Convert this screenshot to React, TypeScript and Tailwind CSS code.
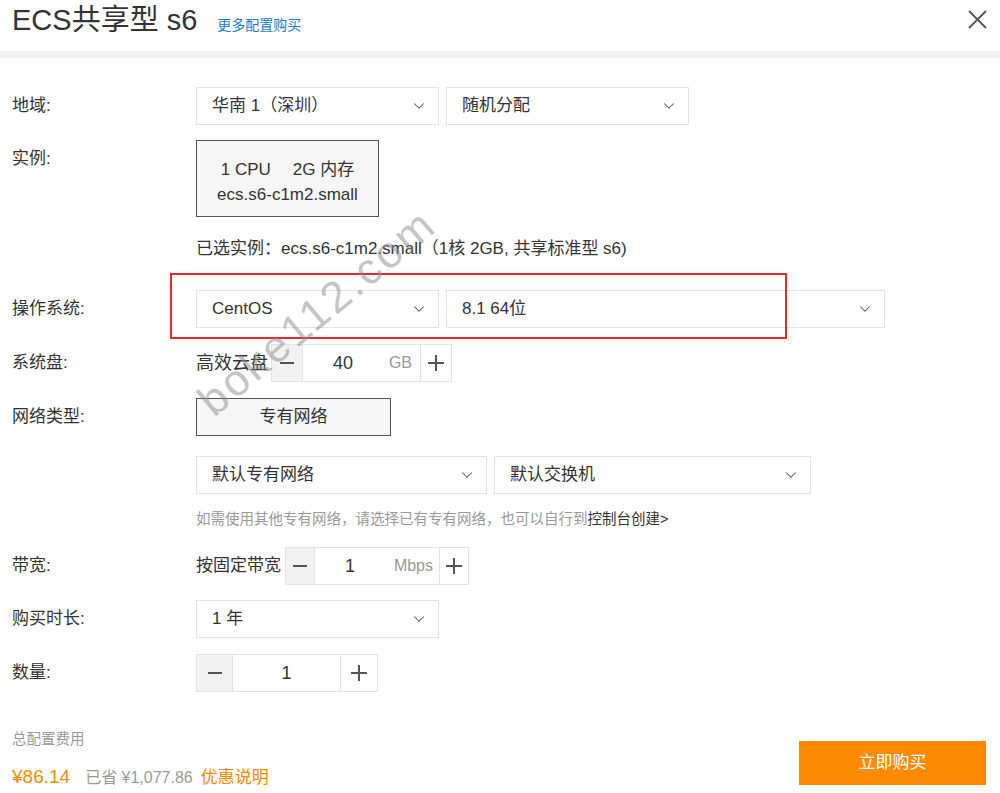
import { ChevronDown } from "lucide-react";

const font = "font-['Liberation_Sans','Noto_Sans_CJK_SC',sans-serif]";

function Select({ className, text }: { className: string; text: string }) {
  return (
    <div
      className={`flex h-[38px] items-center justify-between border border-[#e3e3e3] bg-white pl-[15px] pr-[10px] text-[17px] text-[#333] ${className}`}
    >
      <span>{text}</span>
      <ChevronDown size={18} strokeWidth={1.4} className="text-[#555]" />
    </div>
  );
}

function Label({ children }: { children: string }) {
  return (
    <div className="w-[184px] shrink-0 text-[17px] leading-[38px] text-[#333]">
      {children}
    </div>
  );
}

function MinusBtn({ w }: { w: string }) {
  return (
    <div className={`flex h-full items-center justify-center bg-[#f2f2f2] border-r border-[#e3e3e3] ${w}`}>
      <span className="block h-[1.5px] w-[14px] bg-[#555]" />
    </div>
  );
}

function PlusBtn({ w }: { w: string }) {
  return (
    <div className={`relative flex h-full items-center justify-center border-l border-[#e3e3e3] ${w}`}>
      <span className="block h-[1.5px] w-[16px] bg-[#555]" />
      <span className="absolute block h-[16px] w-[1.5px] bg-[#555]" />
    </div>
  );
}

export default function App() {
  return (
    <div className={`relative h-[793px] w-[1000px] overflow-hidden bg-white ${font}`}>
      <header className="flex h-[51px] items-start pl-[12px]">
        <div className="flex items-baseline">
          <h1 className="text-[29px] leading-[40px] text-[#333]">ECS共享型 s6</h1>
          <a className="ml-[20px] text-[14px] text-[#1a7bd0]">更多配置购买</a>
        </div>
        <svg
          className="ml-auto mr-[13px] mt-[10px]"
          width="19"
          height="19"
          viewBox="0 0 19 19"
          fill="none"
          stroke="#555"
          strokeWidth="1.8"
        >
          <path d="M1 1 L18 18 M18 1 L1 18" />
        </svg>
      </header>
      <div className="h-[7px] bg-[#f1f1f1]" />

      <main className="flex flex-col pl-[12px] pt-[29px]">
        <div className="flex">
          <Label>地域:</Label>
          <div className="flex gap-[7px]">
            <Select className="w-[243px]" text="华南 1（深圳）" />
            <Select className="w-[243px]" text="随机分配" />
          </div>
        </div>

        <div className="mt-[15px] flex">
          <Label>实例:</Label>
          <div className="flex h-[77px] w-[183px] flex-col items-center border border-[#555] bg-[#f6f6f6] pt-[17px] text-[#333]">
            <div className="flex gap-[22px] text-[17px] leading-[24px]">
              <span>1 CPU</span>
              <span>2G 内存</span>
            </div>
            <div className="text-[17px] leading-[26px]">ecs.s6-c1m2.small</div>
          </div>
        </div>

        <div className="mt-[22px] pl-[184px] text-[17px] leading-[20px] text-[#333]">
          已选实例：ecs.s6-c1m2.small（1核 2GB, 共享标准型 s6)
        </div>

        <div className="relative mt-[31px] flex">
          <Label>操作系统:</Label>
          <div className="flex gap-[7px]">
            <Select className="w-[243px]" text="CentOS" />
            <Select className="w-[439px]" text="8.1 64位" />
          </div>
          <div className="absolute left-[158px] top-[-17px] h-[66px] w-[617px] border-2 border-[#e8262d]" />
        </div>

        <div className="mt-[16px] flex">
          <Label>系统盘:</Label>
          <div className="flex items-center">
            <span className="text-[18px] text-[#333]">高效云盘</span>
            <div className="ml-[3px] flex h-[38px] w-[181px] border border-[#e3e3e3]">
              <MinusBtn w="w-[31px]" />
              <div className="flex flex-1 items-center">
                <span className="w-[80px] text-center text-[18px] text-[#333]">40</span>
                <span className="ml-auto mr-[8px] text-[16px] text-[#999]">GB</span>
              </div>
              <PlusBtn w="w-[31px]" />
            </div>
          </div>
        </div>

        <div className="mt-[16px] flex">
          <Label>网络类型:</Label>
          <div className="flex h-[38px] w-[195px] items-center justify-center border border-[#555] bg-[#f6f6f6] text-[17px] text-[#333]">
            专有网络
          </div>
        </div>

        <div className="mt-[20px] flex pl-[184px] gap-[7px]">
          <Select className="w-[291px]" text="默认专有网络" />
          <Select className="w-[317px]" text="默认交换机" />
        </div>

        <div className="mt-[16px] pl-[184px] text-[14.5px] leading-[18px] text-[#999]">
          如需使用其他专有网络，请选择已有专有网络，也可以自行到
          <span className="text-[#333]">控制台创建&gt;</span>
        </div>

        <div className="mt-[19px] flex">
          <Label>带宽:</Label>
          <div className="flex items-center">
            <span className="text-[17px] text-[#333]">按固定带宽</span>
            <div className="ml-[4px] flex h-[38px] w-[184px] border border-[#e3e3e3]">
              <MinusBtn w="w-[29px]" />
              <div className="flex flex-1 items-center">
                <span className="w-[70px] text-center text-[18px] text-[#333]">1</span>
                <span className="ml-auto mr-[6px] text-[16px] text-[#999]">Mbps</span>
              </div>
              <PlusBtn w="w-[29px]" />
            </div>
          </div>
        </div>

        <div className="mt-[15px] flex">
          <Label>购买时长:</Label>
          <Select className="w-[243px]" text="1 年" />
        </div>

        <div className="mt-[16px] flex">
          <Label>数量:</Label>
          <div className="flex h-[38px] w-[182px] border border-[#e3e3e3]">
            <MinusBtn w="w-[36px]" />
            <div className="flex flex-1 items-center justify-center text-[18px] text-[#333]">1</div>
            <PlusBtn w="w-[37px]" />
          </div>
        </div>

        <div className="mt-[38px] flex items-start pr-[14px]">
          <div className="flex flex-col">
            <div className="text-[14.5px] leading-[18px] text-[#999]">总配置费用</div>
            <div className="mt-[17px] flex items-baseline leading-[24px]">
              <span className="text-[19px] text-[#ff8a00]">¥86.14</span>
              <span className="ml-[15px] text-[16px] text-[#999]">已省 ¥1,077.86</span>
              <span className="ml-[8px] text-[17px] text-[#ff8a00]">优惠说明</span>
            </div>
          </div>
          <button className="ml-auto mt-[11px] h-[44px] w-[187px] bg-[#ff8a00] text-[17px] text-white">
            立即购买
          </button>
        </div>
      </main>

      <div className="pointer-events-none absolute left-[170px] top-[290px] origin-center -rotate-[40deg] select-none text-[44px] leading-[44px] tracking-[3px] text-[#8a8a8a]/50">
        boke112.com
      </div>
    </div>
  );
}
